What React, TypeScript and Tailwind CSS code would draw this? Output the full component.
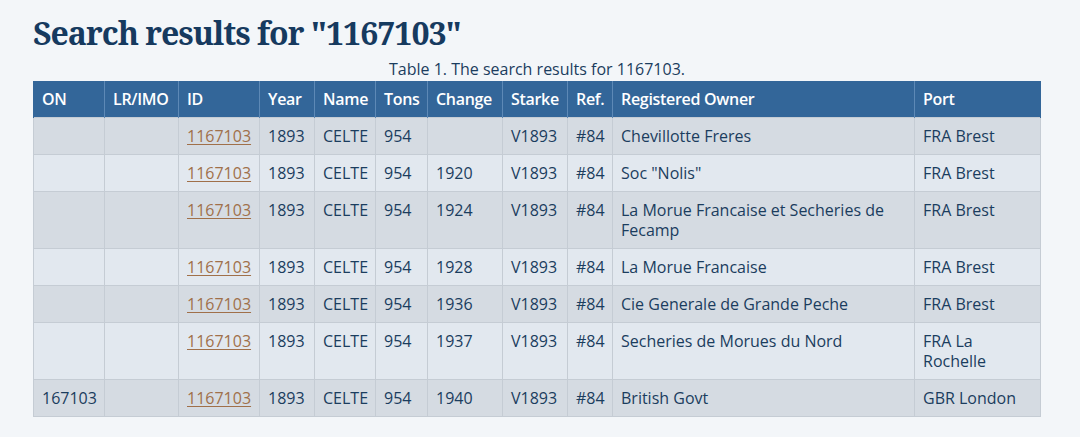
import React from 'react';

type Row = {
  on: string;
  lr: string;
  id: string;
  year: string;
  name: string;
  tons: string;
  change: string;
  starke: string;
  ref: string;
  owner: string;
  port: string;
};

const rows: Row[] = [
  { on: '', lr: '', id: '1167103', year: '1893', name: 'CELTE', tons: '954', change: '', starke: 'V1893', ref: '#84', owner: 'Chevillotte Freres', port: 'FRA Brest' },
  { on: '', lr: '', id: '1167103', year: '1893', name: 'CELTE', tons: '954', change: '1920', starke: 'V1893', ref: '#84', owner: 'Soc "Nolis"', port: 'FRA Brest' },
  { on: '', lr: '', id: '1167103', year: '1893', name: 'CELTE', tons: '954', change: '1924', starke: 'V1893', ref: '#84', owner: 'La Morue Francaise et Secheries de Fecamp', port: 'FRA Brest' },
  { on: '', lr: '', id: '1167103', year: '1893', name: 'CELTE', tons: '954', change: '1928', starke: 'V1893', ref: '#84', owner: 'La Morue Francaise', port: 'FRA Brest' },
  { on: '', lr: '', id: '1167103', year: '1893', name: 'CELTE', tons: '954', change: '1936', starke: 'V1893', ref: '#84', owner: 'Cie Generale de Grande Peche', port: 'FRA Brest' },
  { on: '', lr: '', id: '1167103', year: '1893', name: 'CELTE', tons: '954', change: '1937', starke: 'V1893', ref: '#84', owner: 'Secheries de Morues du Nord', port: 'FRA La Rochelle' },
  { on: '167103', lr: '', id: '1167103', year: '1893', name: 'CELTE', tons: '954', change: '1940', starke: 'V1893', ref: '#84', owner: 'British Govt', port: 'GBR London' },
];

const heads: [string, string][] = [
  ['ON', 'w-[71px]'],
  ['LR/IMO', 'w-[74px]'],
  ['ID', 'w-[81px]'],
  ['Year', 'w-[55px]'],
  ['Name', 'w-[61px]'],
  ['Tons', 'w-[52px]'],
  ['Change', 'w-[75px]'],
  ['Starke', 'w-[65px]'],
  ['Ref.', 'w-[45px]'],
  ['Registered Owner', 'w-[302px]'],
  ['Port', 'w-[126px]'],
];

const td = 'border border-[#c5ccd4] px-2 pt-[8px] pb-[8px] align-top';

export default function App() {
  return (
    <div className="min-h-screen bg-[#f3f6f9] px-[33px] pt-[14px] text-[#1b3d5e] font-['Open_Sans','Noto_Sans',sans-serif]">
      <h1 className="text-[32px] leading-[38px] font-bold tracking-[-1px] text-[#163a5f] font-['Noto_Serif','DejaVu_Serif',serif]">
        Search results for "1167103"
      </h1>
      <table className="mt-[7px] w-[1007px] table-fixed border-collapse text-[16px] leading-[20px]">
        <caption className="text-[16px] leading-[21px] pb-[1px] text-[#1b3d5e]">
          Table 1. The search results for 1167103.
        </caption>
        <thead>
          <tr className="bg-[#336699] text-white">
            {heads.map(([h, w]) => (
              <th
                key={h}
                className={`${w} border-x border-[#5d89b6] first:border-l-[#336699] last:border-r-[#336699] px-2 py-[8px] text-left font-semibold tracking-[-0.3px]`}
              >
                {h}
              </th>
            ))}
          </tr>
        </thead>
        <tbody>
          {rows.map((r, i) => (
            <tr key={i} className={i % 2 === 0 ? 'bg-[#d5dbe2]' : 'bg-[#e2e8ef]'}>
              <td className={td}>{r.on}</td>
              <td className={td}>{r.lr}</td>
              <td className={td}>
                <a href="#" className="text-[#a0704a] underline underline-offset-2">
                  {r.id}
                </a>
              </td>
              <td className={td}>{r.year}</td>
              <td className={td}>{r.name}</td>
              <td className={td}>{r.tons}</td>
              <td className={td}>{r.change}</td>
              <td className={td}>{r.starke}</td>
              <td className={td}>{r.ref}</td>
              <td className={td}>{r.owner}</td>
              <td className={td}>{r.port}</td>
            </tr>
          ))}
        </tbody>
      </table>
    </div>
  );
}
